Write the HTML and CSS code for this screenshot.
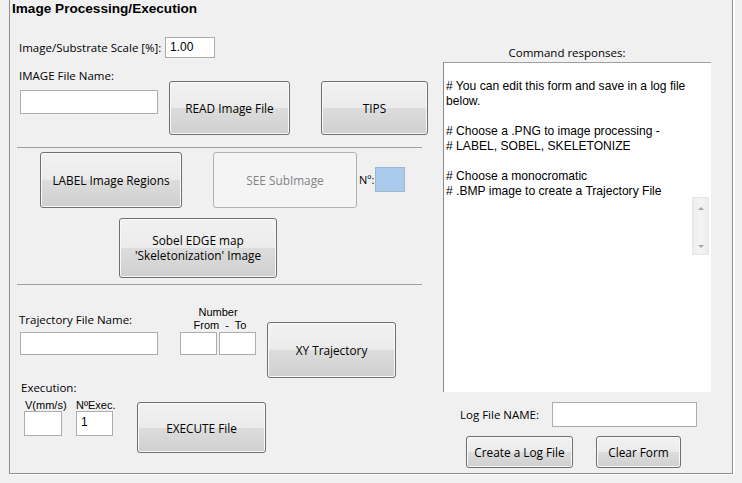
FILE: index.html
```html
<!DOCTYPE html>
<html>
<head>
<meta charset="utf-8">
<link rel="stylesheet" href="styles.css">
</head>
<body>
<div class="panel">
  <div class="left">
    <div class="title">Image Processing/Execution</div>

    <div class="row-scale">
      <span class="lbl scale-lbl">Image/Substrate Scale [%]:</span>
      <div class="edit scale-edit">1.00</div>
    </div>

    <div class="row-image">
      <div class="col-name">
        <div class="lbl name-lbl">IMAGE File Name:</div>
        <div class="edit name-edit"></div>
      </div>
      <button class="btn read-btn">READ Image File</button>
      <button class="btn tips-btn">TIPS</button>
    </div>

    <div class="sep sep1"></div>

    <div class="row-label">
      <button class="btn label-btn">LABEL Image Regions</button>
      <button class="btn disabled see-btn">SEE SubImage</button>
      <span class="lbl no-lbl">Nº:</span>
      <div class="no-box"></div>
    </div>

    <button class="btn sobel-btn">Sobel EDGE map<br>'Skeletonization' Image</button>

    <div class="sep sep2"></div>

    <div class="row-traj">
      <div class="col-name">
        <div class="lbl traj-lbl">Trajectory File Name:</div>
        <div class="edit traj-edit"></div>
      </div>
      <div class="col-num">
        <div class="small num-title">Number</div>
        <div class="small from-to"><span>From</span><span>-</span><span>To</span></div>
        <div class="num-boxes">
          <div class="edit num-edit"></div>
          <div class="edit num-edit"></div>
        </div>
      </div>
      <button class="btn xy-btn">XY Trajectory</button>
    </div>

    <div class="lbl exec-lbl">Execution:</div>
    <div class="row-exec">
      <div class="col-v">
        <div class="small v-lbl">V(mm/s)</div>
        <div class="edit v-edit"></div>
      </div>
      <div class="col-n">
        <div class="small n-lbl">NºExec.</div>
        <div class="edit n-edit">1</div>
      </div>
      <button class="btn exec-btn">EXECUTE File</button>
    </div>
  </div>

  <div class="right">
    <div class="lbl resp-lbl">Command responses:</div>
    <div class="memo">
      <div class="memo-text">
# You can edit this form and save in a log file below.

# Choose a .PNG to image processing -
# LABEL, SOBEL, SKELETONIZE

# Choose a monocromatic
# .BMP image to create a Trajectory File</div>
      <div class="vscroll">
        <svg width="16" height="57" viewBox="0 0 16 57">
          <path d="M5 12 L8 9 L11 12 Z" fill="#a6a6a6"/>
          <path d="M5 47 L8 50 L11 47 Z" fill="#a6a6a6"/>
        </svg>
      </div>
    </div>
    <div class="row-log">
      <span class="lbl log-lbl">Log File NAME:</span>
      <div class="edit log-edit"></div>
    </div>
    <div class="row-logbtn">
      <button class="btn create-btn">Create a Log File</button>
      <button class="btn clear-btn">Clear Form</button>
    </div>
  </div>
</div>
</body>
</html>
```
FILE: styles.css
```css
* { box-sizing: border-box; }
html, body { margin: 0; padding: 0; }
body {
  background: #f0f0f0;
  width: 742px;
  height: 483px;
  overflow: hidden;
  font-family: "Open Sans", "Liberation Sans", sans-serif;
  font-size: 11.5px;
  color: #000;
}
.panel {
  margin-left: 9px;
  width: 724px;
  height: 474px;
  border-left: 1px solid #8d8d95;
  border-right: 1px solid #8d8d95;
  border-bottom: 1px solid #8d8d95;
  display: flex;
  box-shadow: 2px 0 0 #ffffff, 0 1px 0 #ffffff;
}
.left { width: 422px; flex: none; }
.right { width: 300px; flex: none; }

.title {
  font-family: "Liberation Sans", Arial, sans-serif;
  font-weight: bold;
  font-size: 13.6px;
  line-height: 18px;
  height: 18px;
  padding-left: 2px;
  white-space: nowrap;
}
.lbl { line-height: 12px; white-space: nowrap; }
.small {
  font-family: "Liberation Sans", Arial, sans-serif;
  font-size: 11px;
  line-height: 13px;
  white-space: nowrap;
}
.edit {
  background: #fff;
  border: 1px solid #abadb3;
  font-family: "Liberation Sans", Arial, sans-serif;
  font-size: 12px;
  padding-left: 4px;
  line-height: 19px;
}

.btn {
  display: flex;
  align-items: center;
  justify-content: center;
  flex: none;
  padding: 0;
  margin: 0;
  font-family: "Open Sans", "Liberation Sans", sans-serif;
  font-size: 11.8px;
  line-height: 14px;
  color: #000;
  border: 1px solid #707070;
  border-radius: 3px;
  background: linear-gradient(#f2f2f2 0%, #ebebeb 50%, #dddddd 50%, #cfcfcf 100%);
  box-shadow: inset 0 0 0 1px #f8f8f8;
  text-align: center;
}
.btn.disabled {
  background: #f4f4f4;
  border-color: #adb2b5;
  color: #838383;
  box-shadow: none;
}

/* scale row */
.row-scale { display: flex; align-items: center; margin-top: 19px; height: 21px; }
.scale-lbl { width: 146px; margin-left: 9px; }
.scale-edit { width: 50px; height: 21px; line-height: 18px; }

/* image row */
.row-image { display: flex; align-items: flex-start; }
.col-name { margin-left: 10px; width: 138px; flex: none; }
.name-lbl { margin-top: 12px; margin-left: -1px; }
.name-edit { margin-top: 8px; height: 24px; }
.read-btn { margin-left: 11px; margin-top: 23px; width: 121px; height: 54px; }
.tips-btn { margin-left: 31px; margin-top: 23px; width: 107px; height: 54px; }

.sep { height: 1px; background: #a0a0a0; margin-left: 7px; width: 405px; }
.sep1 { margin-top: 12px; }

/* label row */
.row-label { display: flex; align-items: flex-start; margin-top: 4px; }
.label-btn { margin-left: 30px; width: 142px; height: 56px; }
.see-btn { margin-left: 31px; width: 144px; height: 56px; }
.no-lbl { margin-left: 2px; width: 16px; margin-top: 22px; font-size: 11px; }
.no-box { width: 30px; height: 25px; margin-top: 15px; background: #abcbec; border: 1px solid #9fb6cf; }

.sobel-btn { margin-left: 109px; margin-top: 10px; width: 158px; height: 60px; line-height: 15px; }
.sep2 { margin-top: 6px; }

/* trajectory row */
.row-traj { display: flex; align-items: flex-start; }
.traj-lbl { margin-top: 29px; margin-left: -1px; }
.traj-edit { margin-top: 6px; height: 23px; }
.col-num { margin-left: 22px; width: 76px; flex: none; }
.num-title { margin-top: 21px; text-align: center; }
.from-to { display: flex; justify-content: center; gap: 6px; margin-left: 4px; }
.num-boxes { display: flex; gap: 2px; }
.num-edit { width: 37px; height: 23px; }
.xy-btn { margin-left: 11px; margin-top: 37px; width: 129px; height: 56px; }

/* execution */
.exec-lbl { margin-left: 11px; margin-top: 4px; }
.row-exec { display: flex; align-items: flex-start; }
.col-v { margin-left: 14px; width: 38px; flex: none; }
.v-lbl { margin-top: 5px; margin-left: 1px; line-height: 12px; }
.v-edit { height: 25px; }
.col-n { margin-left: 14px; width: 37px; flex: none; }
.n-lbl { margin-top: 5px; line-height: 12px; }
.n-edit { height: 25px; line-height: 21px; }
.exec-btn { margin-left: 24px; margin-top: 8px; width: 129px; height: 51px; }

/* right column */
.resp-lbl { margin-left: 11px; margin-top: 46px; width: 248px; text-align: center; line-height: 14px; }
.memo {
  position: relative;
  margin-left: 11px;
  margin-top: 2px;
  width: 268px;
  height: 330px;
  background: #fff;
  border-top: 1px solid #a0a0a0;
  border-left: 1px solid #8a8a8a;
}
.memo-text {
  font-family: "Liberation Sans", Arial, sans-serif;
  font-size: 12.1px;
  line-height: 15px;
  white-space: pre-wrap;
  padding: 1px 6px 0 2px;
  color: #000;
}
.vscroll {
  position: absolute;
  left: 248px;
  top: 134px;
  width: 17px;
  height: 58px;
  background: linear-gradient(90deg, #ececec, #f4f4f4 50%, #ececec);
  border: 1px solid #e6e6e6;
}
.vscroll svg { display: block; }

.row-log { display: flex; align-items: center; margin-top: 10px; height: 25px; }
.log-lbl { margin-left: 28px; width: 92px; }
.log-edit { width: 145px; height: 25px; }
.row-logbtn { display: flex; margin-top: 9px; }
.create-btn { margin-left: 34px; width: 107px; height: 32px; }
.clear-btn { margin-left: 23px; width: 85px; height: 32px; }
```
